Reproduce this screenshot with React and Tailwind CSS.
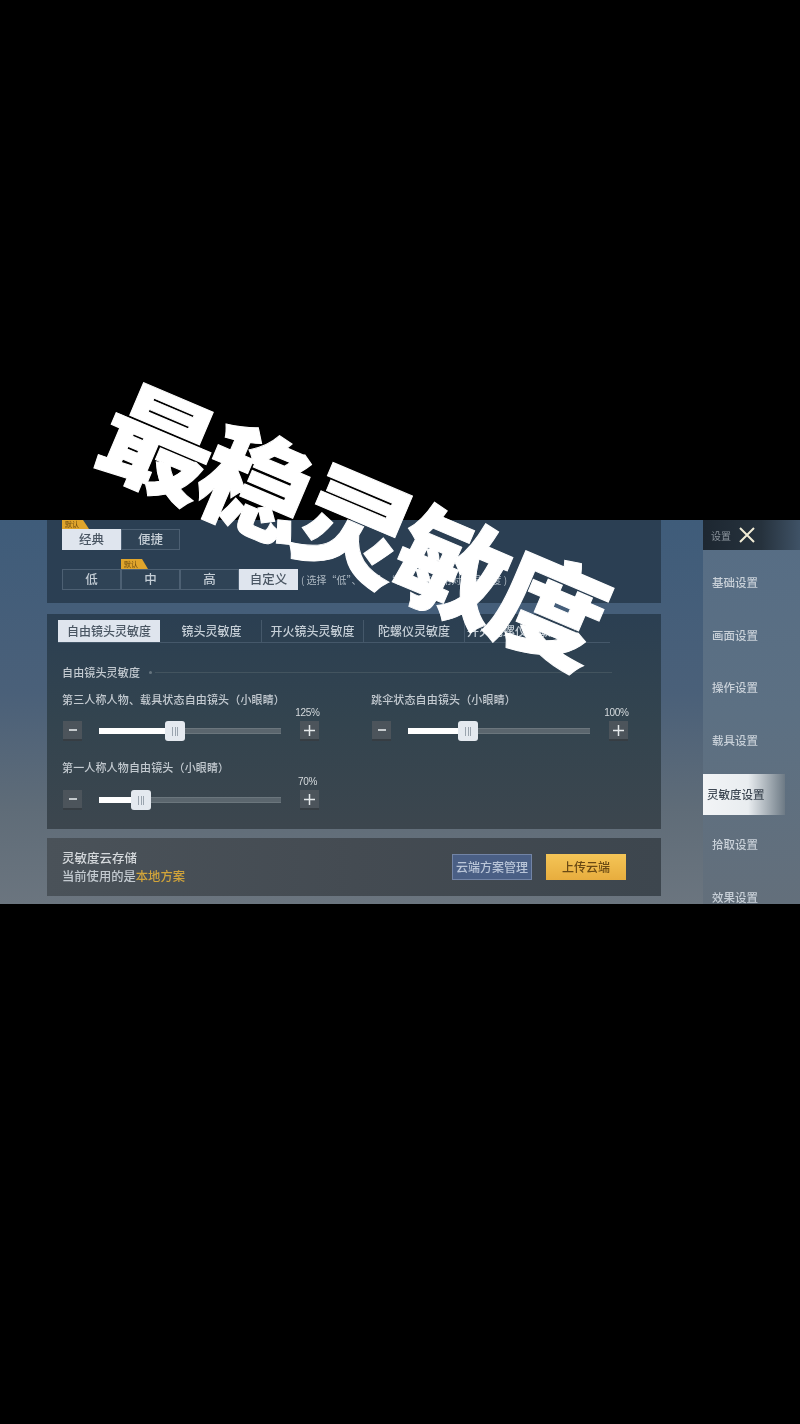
import React from "react";

const font = { fontFamily: '"Noto Sans CJK SC","Noto Sans",sans-serif' };

function Tag({ className = "" }) {
  return (
    <div className={`w-[27px] bg-[#e0a52c] text-[#6b4a10] text-[7px] pl-[3px] [clip-path:polygon(0_0,78%_0,100%_100%,0_100%)] ${className}`}>
      默认
    </div>
  );
}

function Seg({ label, active }) {
  return (
    <div
      className={`w-[59px] h-[21px] flex items-center justify-center text-[12.5px] font-medium border ${
        active
          ? "bg-[#dfe5ee] text-[#4a5663] border-[#dfe5ee]"
          : "bg-[#2f4356] text-[#c5ced6] border-[#4d6073]"
      }`}
    >
      {label}
    </div>
  );
}

function Tab({ label, active, w, start }) {
  return (
    <div
      className={`${w} h-[22px] shrink-0 flex items-center text-[12px] font-medium whitespace-nowrap ${
        start ? "justify-start pl-[2px]" : "justify-center"
      } ${active ? "bg-[#dfe5ee] text-[#4a5663]" : "text-[#c5ced6] border-r border-[#45586a]"}`}
    >
      {label}
    </div>
  );
}

function Square({ children }) {
  return (
    <div className="w-[19px] h-[20px] shrink-0 bg-[#4c545b] border-b-2 border-[#363d43] flex items-center justify-center text-[#e4e8ea]">
      {children}
    </div>
  );
}

function Slider({ label, value, fill, labelH = "h-[30px]" }) {
  return (
    <div className="w-[290px]">
      <div className={`text-[11px] font-medium leading-[16px] text-[#c3cad0] tracking-[0.15px] ${labelH}`}>{label}</div>
      <div className="flex items-center">
        <div className="ml-[1px]">
          <Square>
            <svg width="10" height="10" viewBox="0 0 10 10"><path d="M1 5h8" stroke="currentColor" strokeWidth="1.6" /></svg>
          </Square>
        </div>
        <div className="ml-[17px] w-[182px] flex items-center">
          <div className={`${fill} h-[6px] bg-white`} />
          <div className="w-[20px] h-[20px] shrink-0 -mx-[1px] bg-[#e4e9ef] rounded-[3px] flex items-center justify-center gap-[1.5px] z-10">
            <span className="w-[1px] h-[9px] bg-[#9aa4ae]" />
            <span className="w-[1px] h-[9px] bg-[#9aa4ae]" />
            <span className="w-[1px] h-[9px] bg-[#9aa4ae]" />
          </div>
          <div className="flex-1 h-[6px] bg-[#5b666e] border-y border-[#6b767d]" />
        </div>
        <div className="ml-[19px] relative">
          <div className="absolute -top-[14px] -left-[2px] w-[19px] flex justify-center text-[10px] tracking-[-0.3px] leading-[12px] text-[#d5dadd] whitespace-nowrap" style={{ fontFamily: '"Liberation Sans",sans-serif' }}>
            {value}
          </div>
          <Square>
            <svg width="13" height="13" viewBox="0 0 13 13"><path d="M1 6.5h11M6.5 1v11" stroke="currentColor" strokeWidth="1.5" /></svg>
          </Square>
        </div>
      </div>
    </div>
  );
}

export default function App() {
  const menu = ["基础设置", "画面设置", "操作设置", "载具设置", "灵敏度设置", "拾取设置", "效果设置"];
  return (
    <div className="w-[800px] h-[1424px] bg-black overflow-hidden relative" style={font}>
      <div className="h-[520px]" />
      <div className="h-[384px] flex overflow-hidden blur-[0.4px] bg-[linear-gradient(180deg,#3f5c7a_0%,#4a6079_45%,#5f6c78_75%,#6b757f_100%)]">
        <div className="w-[661px] shrink-0 pl-[47px] flex flex-col">
          {/* top panel */}
          <div className="h-[83px] shrink-0 bg-[#2b3f53] pl-[15px]">
            <Tag className="h-[9px] leading-[9px]" />
            <div className="flex">
              <Seg label="经典" active />
              <Seg label="便捷" />
            </div>
            <div className="ml-[59px] mt-[9px]"><Tag className="h-[10px] leading-[10px]" /></div>
            <div className="flex items-center">
              <Seg label="低" />
              <Seg label="中" />
              <Seg label="高" />
              <Seg label="自定义" active />
              <div className="ml-[3px] text-[10px] text-[#aeb9c3] whitespace-nowrap">( 选择“低”、“中”、“高”，将应用对应灵敏度 )</div>
            </div>
          </div>
          {/* main panel */}
          <div className="h-[215px] shrink-0 mt-[11px] bg-[linear-gradient(180deg,#2b3f52_0%,#33444f_50%,#3c464e_100%)] pl-[11px] pt-[6px]">
            <div className="flex w-[552px] border-b border-[#45586a] h-[23px]">
              <Tab label="自由镜头灵敏度" active w="w-[102px]" />
              <div className="w-[2px] shrink-0" />
              <Tab label="镜头灵敏度" w="w-[100px]" />
              <Tab label="开火镜头灵敏度" w="w-[102px]" />
              <Tab label="陀螺仪灵敏度" w="w-[101px]" />
              <Tab label="开火陀螺仪灵敏度" w="w-[110px]" start />
            </div>
            <div className="pl-[4px]">
              <div className="flex items-center mt-[21px] h-[16px]">
                <span className="text-[11px] font-medium text-[#c3cad0] tracking-[0.15px]">自由镜头灵敏度</span>
                <span className="ml-[9px] w-[3px] h-[3px] rounded-full bg-[#66757f]" />
                <span className="ml-[3px] w-[457px] h-[1px] bg-[#43545f]" />
              </div>
              <div className="flex gap-[19px] mt-[11px]">
                <Slider label="第三人称人物、载具状态自由镜头（小眼睛）" value="125%" fill="w-[67px]" />
                <Slider label="跳伞状态自由镜头（小眼睛）" value="100%" fill="w-[51px]" />
              </div>
              <div className="mt-[18px]">
                <Slider label="第一人称人物自由镜头（小眼睛）" value="70%" fill="w-[33px]" labelH="h-[31px]" />
              </div>
            </div>
          </div>
          {/* cloud panel */}
          <div className="h-[58px] shrink-0 mt-[9px] bg-[linear-gradient(90deg,#4a5259_0%,#444b52_50%,#3d464e_100%)] pl-[15px] pr-[35px] flex items-center justify-between">
            <div>
              <div className="text-[12.5px] font-medium leading-[18px] text-[#d5d9dc]">灵敏度云存储</div>
              <div className="text-[12.3px] font-medium leading-[18px] text-[#c3cad0]">
                当前使用的是<span className="text-[#d1a43a]">本地方案</span>
              </div>
            </div>
            <div className="flex gap-[14px] items-center">
              <div className="w-[80px] h-[26px] bg-[#4a5f85] border border-[#7284a6] text-[#b9c5d8] text-[12px] font-medium flex items-center justify-center">云端方案管理</div>
              <div className="w-[80px] h-[26px] bg-[linear-gradient(180deg,#f4c557,#e7ad3e)] text-[#6a4a14] text-[12px] font-medium flex items-center justify-center">上传云端</div>
            </div>
          </div>
        </div>
        <div className="w-[42px] shrink-0" />
        {/* sidebar */}
        <div className="w-[97px] shrink-0 bg-[linear-gradient(180deg,#566d85_0%,#5c7083_50%,#636f7b_100%)] flex flex-col">
          <div className="h-[30px] shrink-0 bg-[linear-gradient(90deg,#1d2731_0%,#26323d_60%,#3f5266_100%)] flex items-center pl-[8px]">
            <span className="text-[10px] text-[#8b949c]">设置</span>
            <svg className="ml-[6px]" width="20" height="20" viewBox="0 0 20 20"><path d="M3 3l14 14M17 3L3 17" stroke="#f1ecd6" strokeWidth="2" /></svg>
          </div>
          <div className="flex flex-col pt-[6.5px]">
            {menu.map((m, i) =>
              i === 4 ? (
                <div key={m} className="h-[41px] w-[82px] mt-[7.5px] bg-[linear-gradient(90deg,#f2f4f6_0%,#e9edf0_55%,#6d7a85_100%)] text-[#3e4853] text-[11.5px] font-medium flex items-center pl-[4px] whitespace-nowrap">
                  {m}
                </div>
              ) : (
                <div key={m} className={`h-[52.5px] shrink-0 flex items-center pl-[9px] text-[11.5px] font-medium text-[#c8d0d8] ${i === 5 ? "mt-[3.75px]" : ""}`}>
                  {m}
                </div>
              )
            )}
          </div>
        </div>
      </div>
      {/* title overlay */}
      <div className="absolute left-[354px] top-[519px] -translate-x-1/2 -translate-y-1/2 rotate-[23deg] whitespace-nowrap text-white text-[112px] leading-none font-black tracking-[-6px] [-webkit-text-stroke:1px_white]">
        最稳灵敏度
      </div>
    </div>
  );
}
